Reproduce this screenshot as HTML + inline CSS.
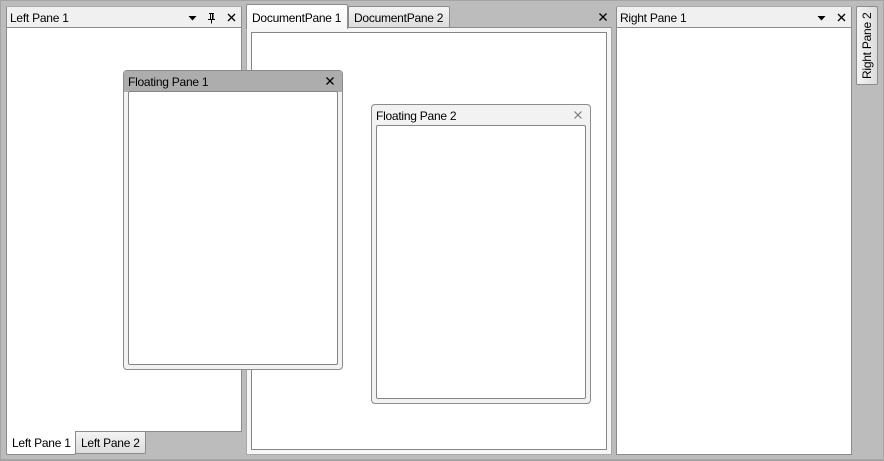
<!DOCTYPE html>
<html><head><meta charset="utf-8"><style>
html,body{margin:0;padding:0;width:884px;height:461px;overflow:hidden;background:#bcbcbc}
body{position:relative;font:12px/16px "Liberation Sans",sans-serif;letter-spacing:-.25px;color:#000}
.a{position:absolute;box-sizing:border-box}
.t{position:absolute;white-space:nowrap;height:16px}
svg{position:absolute;overflow:visible}
</style></head><body>
<div class="a" style="left:0;top:0;width:884px;height:461px;border:1px solid #a4a4a4;border-bottom:2px solid #a4a4a4"></div>

<!-- Left pane -->
<div class="a" style="left:6px;top:6px;width:236px;height:426px;background:#fff;border:1px solid #8c8c8c;border-top-color:#aaa;border-radius:2px 2px 0 0"></div>
<div class="a" style="left:7px;top:7px;width:234px;height:21px;background:#f0f0f0;border-bottom:1px solid #8c8c8c"></div>
<div class="t" style="left:10px;top:10px">Left Pane 1</div>
<svg style="left:0;top:0" width="1" height="1"><path d="M188.500 16h8l-4 4.500z" fill="#000"/><path d="M209 13.500h5M210.500 14v5M213 14v5" stroke="#000" fill="none"/><path d="M208 19.500h7M211.500 20v3.500" stroke="#000" fill="none"/><path d="M212 14h1.500v5H212z" fill="#000"/><path d="M228 14l7 7M235 14l-7 7" stroke="#000" stroke-width="1.300" fill="none"/></svg>

<!-- Left tabs -->
<div class="a" style="left:75px;top:431px;width:71px;height:23px;background:linear-gradient(#f4f4f4,#dcdcdc);border:1px solid #8c8c8c;border-radius:0 0 2px 2px"></div>
<div class="t" style="left:81px;top:435px">Left Pane 2</div>
<div class="a" style="left:6px;top:431px;width:70px;height:24px;background:#fff;border:1px solid #8c8c8c;border-top:0;border-radius:0 0 2px 2px"></div>
<div class="t" style="left:12px;top:435px">Left Pane 1</div>

<!-- Document pane -->
<div class="a" style="left:246px;top:27px;width:366px;height:428px;background:#f6f6f6;border:1px solid #a8a8a8;border-top-color:#8c8c8c"></div>
<div class="a" style="left:251px;top:32px;width:356px;height:418px;background:#fff;border:1px solid #858585"></div>
<div class="a" style="left:348px;top:6px;width:102px;height:22px;background:linear-gradient(#f4f4f4,#dcdcdc);border:1px solid #8c8c8c;border-radius:2px 2px 0 0"></div>
<div class="t" style="left:354px;top:10px">DocumentPane 2</div>
<div class="a" style="left:246px;top:4px;width:102px;height:25px;background:linear-gradient(#fff,#f6f6f6);border:1px solid #8c8c8c;border-bottom:0;border-radius:2px 2px 0 0"></div>
<div class="t" style="left:252px;top:10px">DocumentPane 1</div>
<svg style="left:0;top:0" width="1" height="1"><path d="M599.500 13.500l7 7M606.500 13.500l-7 7" stroke="#000" stroke-width="1.300" fill="none"/></svg>

<!-- Right pane -->
<div class="a" style="left:616px;top:6px;width:236px;height:449px;background:#fff;border:1px solid #8c8c8c;border-top-color:#aaa;border-radius:2px 2px 0 0"></div>
<div class="a" style="left:617px;top:7px;width:234px;height:21px;background:#f0f0f0;border-bottom:1px solid #8c8c8c"></div>
<div class="t" style="left:620px;top:10px">Right Pane 1</div>
<svg style="left:0;top:0" width="1" height="1"><path d="M817.500 16h8l-4 4.500z" fill="#000"/><path d="M838 14l7 7M845 14l-7 7" stroke="#000" stroke-width="1.300" fill="none"/></svg>

<!-- Right side tab -->
<div class="a" style="left:856px;top:6px;width:22px;height:79px;background:linear-gradient(90deg,#f4f4f4,#dcdcdc);border:1px solid #8c8c8c;border-radius:2px"></div>
<div class="t" style="left:867px;top:79px;transform-origin:0 0;transform:rotate(-90deg) translateY(-8px)">Right Pane 2</div>

<!-- Floating 1 -->
<div class="a" style="left:123px;top:70px;width:220px;height:300px;background:#f2f2f2;border:1px solid #8c8c8c;border-radius:4px"></div>
<div class="a" style="left:124px;top:71px;width:218px;height:21px;background:#adadad;border-radius:3px 3px 0 0"></div>
<div class="a" style="left:128px;top:91px;width:210px;height:274px;background:#fff;border:1px solid #858585;border-radius:2px"></div>
<div class="t" style="left:128px;top:74px">Floating Pane 1</div>
<svg style="left:0;top:0" width="1" height="1"><path d="M326.500 77.500l7 7M333.500 77.500l-7 7" stroke="#000" stroke-width="1.300" fill="none"/></svg>

<!-- Floating 2 -->
<div class="a" style="left:371px;top:104px;width:220px;height:300px;background:#f2f2f2;border:1px solid #8c8c8c;border-radius:4px"></div>
<div class="a" style="left:376px;top:125px;width:210px;height:274px;background:#fff;border:1px solid #858585;border-radius:2px"></div>
<div class="t" style="left:376px;top:108px">Floating Pane 2</div>
<svg style="left:0;top:0" width="1" height="1"><path d="M574.500 111.500l7 7M581.500 111.500l-7 7" stroke="#777" stroke-width="1.100" fill="none"/></svg>
</body></html>
